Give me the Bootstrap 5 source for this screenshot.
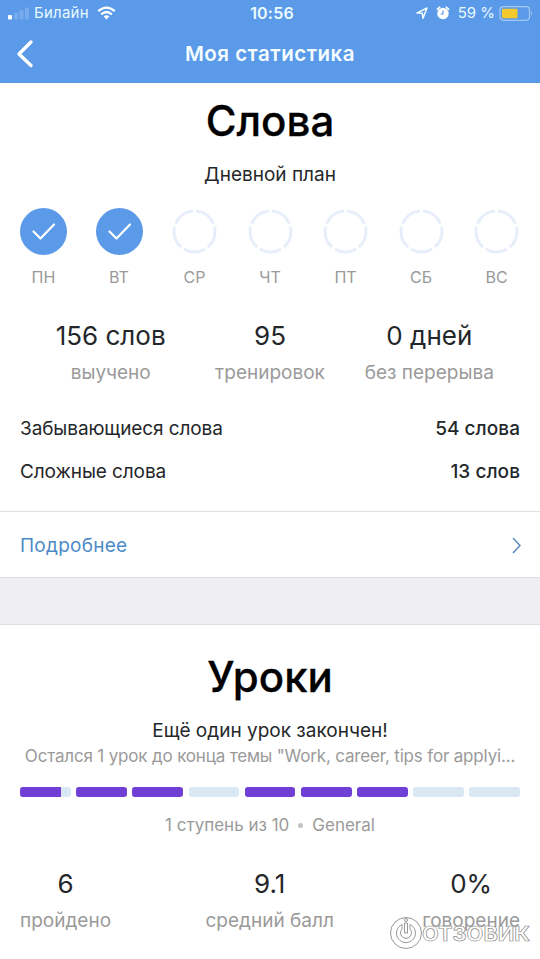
<!DOCTYPE html>
<html lang="ru">
<head>
<meta charset="utf-8">
<meta name="viewport" content="width=device-width, initial-scale=1">
<title>Моя статистика</title>
<link href="https://cdn.jsdelivr.net/npm/bootstrap@5.3.0/dist/css/bootstrap.min.css" rel="stylesheet">
<style>
body{font-family:Inter,"Liberation Sans",sans-serif;color:#24272a;background:#fff;font-size:19px;line-height:26px;overflow:hidden;height:959px}
.topbar{background:#5a9ae8;height:83px;color:#fff;border-bottom:1px solid #5c97dc}
.status{height:26px;padding:0 6px 0 8px;font-size:15px;color:#eafaff}
.carrier{letter-spacing:.25px}
.status .clock{font-weight:600;font-size:16px;letter-spacing:.2px;padding-left:4px}
.titlebar{height:56px}
.screen-title{font-size:20.5px;font-weight:600;color:#f4fdff;letter-spacing:.5px}
.block-title{font-size:42px;line-height:50px;font-weight:500;color:#000;margin:0;-webkit-text-stroke:.3px #000}
.words{height:429px;padding:13px 20px 0;border-bottom:1px solid #dfdfe1}
.plan{margin-top:16px;height:26px}
.days{display:grid;grid-template-columns:repeat(7,47px);justify-content:space-between;margin-top:20px}
.days svg{display:block}
.day-name{font-size:16px;line-height:24px;margin-top:10px;color:#9a9a9a;text-align:center}
.num{font-size:26px;line-height:34px;text-align:center}
.cap{font-size:19px;line-height:26px;margin-top:7px;color:#9a9a9a;text-align:center;white-space:nowrap}
.totals{margin:30px 11px 0}
.pair{height:26px;margin-top:17px}
.pair:nth-last-child(2){margin-top:30px}
.pair span{letter-spacing:-.1px}
.pair b{font-weight:500;letter-spacing:.05px}
.details{height:65px;padding:2px 19px 0 20px;color:#4d8ac6;text-decoration:none}
.details span{letter-spacing:.25px}
.gap-band{height:48px;background:#efeef3;border-top:1px solid #dedee2;border-bottom:1px solid #dedee2}
.lessons{padding:27px 20px 0}
.note{font-size:17px;line-height:24px;color:#9a9a9a;white-space:nowrap;text-align:center}
.topic{letter-spacing:-.17px}
.steps{display:grid;grid-template-columns:repeat(9,1fr);gap:5.5px;margin-top:19px}
.steps .progress{--bs-progress-height:10px;--bs-progress-bg:#dae7f5;--bs-progress-bar-bg:#7040d6;border-radius:3px}
.dot{width:5px;height:5px;border-radius:50%;background:#c2c2c4;margin:0 9px}
.results{margin-top:30px}
.results>:nth-child(2){padding-left:6px}
.wm{position:absolute;left:386px;top:913px}
</style>
</head>
<body>
<header class="topbar">
  <div class="status d-flex align-items-center position-relative">
    <svg width="22" height="14" viewBox="0 0 22 14"><rect x="0" y="9" width="4" height="4.500" rx="1" fill="#fff"/><g fill="#78abee"><rect x="6" y="6.500" width="4" height="7" rx="1"/><rect x="11.500" y="4" width="4" height="9.500" rx="1"/><rect x="17" y="1.500" width="4" height="12" rx="1"/></g></svg>
    <span class="ms-1 carrier">Билайн</span>
    <svg class="ms-2" width="19" height="14" viewBox="0 0 19 14"><g fill="none" stroke="#fff" stroke-width="2.300"><path d="M1.200 5.200Q9.500-2 17.800 5.200"/><path d="M4.200 8.300Q9.500 3.700 14.800 8.300"/></g><path d="M6.600 10.300Q9.500 8 12.400 10.300L9.500 13.400Z" fill="#fff"/></svg>
    <span class="clock position-absolute start-50 translate-middle-x">10:56</span>
    <div class="ms-auto d-flex align-items-center">
      <svg width="12" height="12" viewBox="0 0 12 12"><path d="M1 6 11 1 7 11.200 6.300 6.200Z" fill="none" stroke="#eafaff" stroke-width="1.600" stroke-linejoin="round"/></svg>
      <svg class="ms-2" width="14" height="14" viewBox="0 0 14 14"><circle cx="7" cy="7.500" r="5.700" fill="#fff"/><path d="M1.500 3.200 3.600 1.300M12.500 3.200 10.400 1.300" stroke="#fff" stroke-width="1.800" stroke-linecap="round"/><path d="M7 4.500V8H4.500" fill="none" stroke="#5a9ae8" stroke-width="1.200"/></svg>
      <span class="ms-2">59 %</span>
      <svg class="ms-1" width="35" height="15" viewBox="0 0 35 15"><rect x="1" y=".7" width="29.500" height="13.600" rx="3.500" fill="none" stroke="#a5c9f2" stroke-width="1.200"/><rect x="3" y="2.800" width="15.500" height="9.500" rx="1.200" fill="#f3c92b"/><path d="M32 5q2 2.500 0 5" fill="#a5c9f2"/></svg>
    </div>
  </div>
  <div class="titlebar d-flex align-items-center justify-content-center position-relative">
    <svg class="position-absolute start-0 ms-3" width="18" height="30" viewBox="0 0 18 30"><path d="M15 3 3 15 15 26.500" fill="none" stroke="#fff" stroke-width="3.400" stroke-linecap="round" stroke-linejoin="round"/></svg>
    <span class="screen-title">Моя статистика</span>
  </div>
</header>
<main>
  <section class="words">
    <h1 class="block-title text-center">Слова</h1>
    <div class="plan text-center"><span>Дневной план</span></div>
    <svg class="d-none"><defs>
      <g id="done"><circle cx="23.500" cy="23.500" r="23.500" fill="#5a9ae8"/><path d="M13.500 23.500 20.500 30.500 34 16.500" fill="none" stroke="#fff" stroke-width="2.200" stroke-linecap="round" stroke-linejoin="round"/></g>
      <g id="todo"><circle cx="23.500" cy="23.500" r="20.500" fill="none" stroke="#e8eef9" stroke-width="3" pathLength="100" stroke-dasharray="17.500 2.500" stroke-dashoffset="-1.250" transform="rotate(-90 23.500 23.500)"/></g>
    </defs></svg>
    <div class="days">
      <div><svg width="47" height="47"><use href="#done"/></svg><div class="day-name">ПН</div></div>
      <div><svg width="47" height="47"><use href="#done"/></svg><div class="day-name">ВТ</div></div>
      <div><svg width="47" height="47"><use href="#todo"/></svg><div class="day-name">СР</div></div>
      <div><svg width="47" height="47"><use href="#todo"/></svg><div class="day-name">ЧТ</div></div>
      <div><svg width="47" height="47"><use href="#todo"/></svg><div class="day-name">ПТ</div></div>
      <div><svg width="47" height="47"><use href="#todo"/></svg><div class="day-name">СБ</div></div>
      <div><svg width="47" height="47"><use href="#todo"/></svg><div class="day-name">ВС</div></div>
    </div>
    <div class="totals row g-0">
      <div class="col"><div class="num">156 слов</div><div class="cap">выучено</div></div>
      <div class="col"><div class="num">95</div><div class="cap">тренировок</div></div>
      <div class="col"><div class="num">0 дней</div><div class="cap">без перерыва</div></div>
    </div>
    <div class="pair d-flex justify-content-between"><span>Забывающиеся слова</span><b>54 слова</b></div>
    <div class="pair d-flex justify-content-between"><span>Сложные слова</span><b>13 слов</b></div>
  </section>
  <a class="details d-flex align-items-center justify-content-between" href="#"><span>Подробнее</span>
    <svg width="9" height="17" viewBox="0 0 9 17"><path d="M1 1 8 8.500 1 16" fill="none" stroke="#5b8fc0" stroke-width="1.600"/></svg></a>
  <div class="gap-band"></div>
  <section class="lessons">
    <h2 class="block-title text-center">Уроки</h2>
    <div class="text-center mt-3">Ещё один урок закончен!</div>
    <div class="note topic">Остался 1 урок до конца темы "Work, career, tips for applyi...</div>
    <div class="steps">
      <div class="progress"><div class="progress-bar" style="width:81%"></div></div>
      <div class="progress"><div class="progress-bar w-100"></div></div>
      <div class="progress"><div class="progress-bar w-100"></div></div>
      <div class="progress"></div>
      <div class="progress"><div class="progress-bar w-100"></div></div>
      <div class="progress"><div class="progress-bar w-100"></div></div>
      <div class="progress"><div class="progress-bar w-100"></div></div>
      <div class="progress"></div>
      <div class="progress"></div>
    </div>
    <div class="note d-flex justify-content-center align-items-center mt-3"><span>1 ступень из 10</span><i class="dot"></i><span>General</span></div>
    <div class="results d-flex justify-content-between">
      <div><div class="num">6</div><div class="cap">пройдено</div></div>
      <div><div class="num">9.1</div><div class="cap">средний балл</div></div>
      <div><div class="num">0%</div><div class="cap">говорение</div></div>
    </div>
  </section>
</main>
<svg class="wm" width="150" height="40" viewBox="0 0 150 40"><g fill="none" stroke="#8d8d8d" stroke-width=".9"><circle cx="20" cy="20" r="15.500" fill="#fff" fill-opacity=".6"/><path d="M16 11.500A9.500 9.500 0 1 0 24 11.500V16A5.500 5.500 0 1 1 16 16Z"/><path d="M18.500 10h3v10h-3z"/><circle cx="20" cy="7" r="1.500"/></g><text x="36" y="27.500" font-family="Inter,sans-serif" font-weight="700" font-size="20" textLength="108" lengthAdjust="spacingAndGlyphs" fill="#fff" fill-opacity=".5" stroke="#8d8d8d" stroke-width=".7">ОТЗОВИК</text></svg>
<script src="https://cdn.jsdelivr.net/npm/bootstrap@5.3.0/dist/js/bootstrap.bundle.min.js"></script>
</body>
</html>
